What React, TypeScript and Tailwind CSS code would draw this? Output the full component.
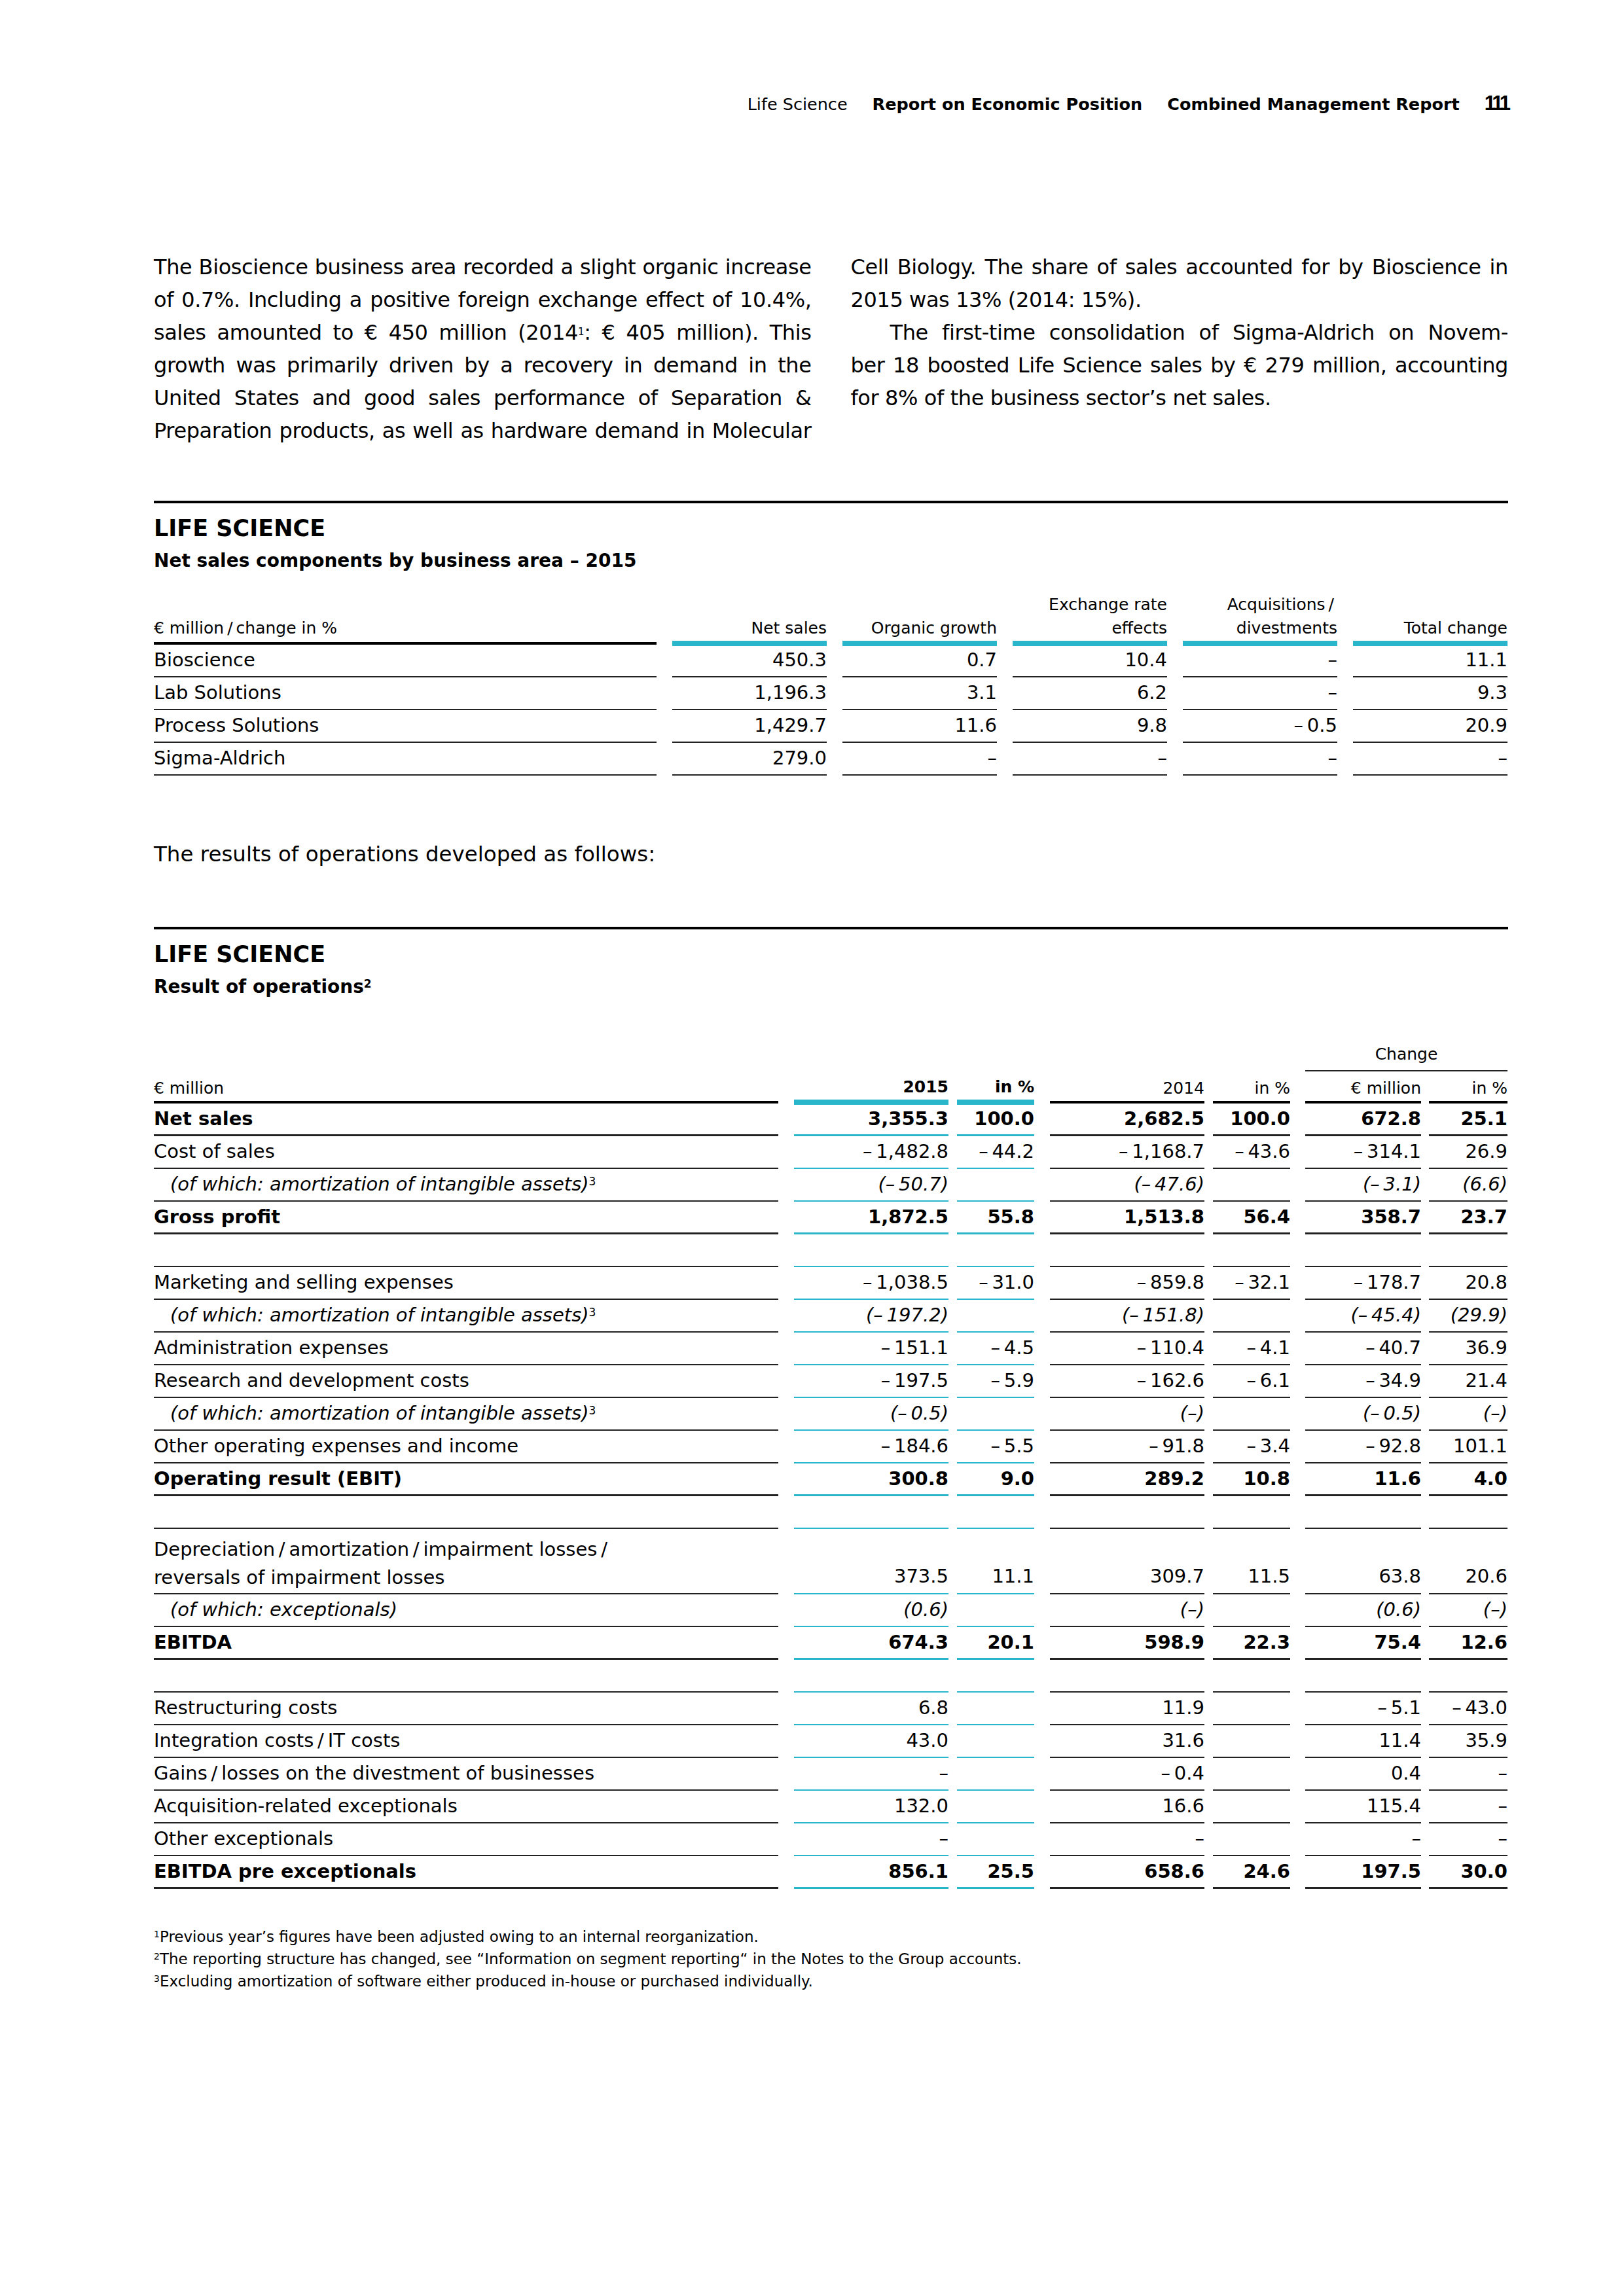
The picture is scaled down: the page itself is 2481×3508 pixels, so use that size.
import React from "react";

const CYAN = "border-[#29b5ca]";
const DARK = "border-[#222]";

// one justified line of body copy
function Line({ children, last = false, indent = false }: { children: React.ReactNode; last?: boolean; indent?: boolean }) {
  return (
    <span
      className={
        "block whitespace-nowrap " +
        (last ? "text-left" : "text-justify [text-align-last:justify]") +
        (indent ? " pl-[60px]" : "")
      }
    >
      {children}
    </span>
  );
}

function SectionTitle({ sub }: { sub: React.ReactNode }) {
  return (
    <div>
      <div className="h-[4px] bg-black" />
      <div className="mt-[18px] text-[35px] leading-[40px] font-bold">LIFE SCIENCE</div>
      <div className="mt-[12px] text-[28px] leading-[36px] font-bold">{sub}</div>
    </div>
  );
}

const sl = "\u2009/\u2009";

/* ---------- table 1 ---------- */

const t1Heads: React.ReactNode[] = [
  "Net sales",
  "Organic growth",
  <>Exchange rate<br />effects</>,
  <>Acquisitions{sl}<br />divestments</>,
  "Total change",
];

const t1Rows = [
  { label: "Bioscience", values: ["450.3", "0.7", "10.4", "–", "11.1"] },
  { label: "Lab Solutions", values: ["1,196.3", "3.1", "6.2", "–", "9.3"] },
  { label: "Process Solutions", values: ["1,429.7", "11.6", "9.8", "–\u20090.5", "20.9"] },
  { label: "Sigma-Aldrich", values: ["279.0", "–", "–", "–", "–"] },
];

function NetSalesTable() {
  return (
    <div className="mt-[31px]">
      <div className="flex items-end text-[25px] leading-[36px]">
        <div className={"w-[768px] pb-[3px] border-b-4 border-black"}>€ million{sl}change in %</div>
        {t1Heads.map((h, i) => (
          <div key={i} className={"w-[236px] ml-[24px] text-right pb-[1px] border-b-8 mb-[-2px] " + CYAN}>
            {h}
          </div>
        ))}
      </div>
      {t1Rows.map((r) => (
        <div key={r.label} className="flex text-[29px]">
          <div className={"w-[768px] h-[50px] flex items-center border-b-2 " + DARK}>{r.label}</div>
          {r.values.map((v, i) => (
            <div key={i} className={"w-[236px] ml-[24px] h-[50px] flex items-center justify-end border-b-2 " + DARK}>
              {v}
            </div>
          ))}
        </div>
      ))}
    </div>
  );
}

/* ---------- table 2 ---------- */

const cols2 = [
  { cls: "w-[236px] ml-[24px]", cyan: true },
  { cls: "w-[118px] ml-[13px]", cyan: true },
  { cls: "w-[236px] ml-[24px]", cyan: false },
  { cls: "w-[118px] ml-[13px]", cyan: false },
  { cls: "w-[177px] ml-[23px]", cyan: false },
  { cls: "w-[120px] ml-[12px]", cyan: false },
];

type Kind = "normal" | "bold" | "sub" | "spacer" | "double";

interface Row2 {
  label?: React.ReactNode;
  values?: string[];
  kind: Kind;
}

const m = (s: string) => "–\u2009" + s;
const ofWhich = (
  <>
    (of which: amortization of intangible assets)<sup className="text-[17px] not-italic">3</sup>
  </>
);

const t2Rows: Row2[] = [
  { label: "Net sales", kind: "bold", values: ["3,355.3", "100.0", "2,682.5", "100.0", "672.8", "25.1"] },
  { label: "Cost of sales", kind: "normal", values: [m("1,482.8"), m("44.2"), m("1,168.7"), m("43.6"), m("314.1"), "26.9"] },
  { label: ofWhich, kind: "sub", values: ["(" + m("50.7") + ")", "", "(" + m("47.6") + ")", "", "(" + m("3.1") + ")", "(6.6)"] },
  { label: "Gross profit", kind: "bold", values: ["1,872.5", "55.8", "1,513.8", "56.4", "358.7", "23.7"] },
  { kind: "spacer" },
  { label: "Marketing and selling expenses", kind: "normal", values: [m("1,038.5"), m("31.0"), m("859.8"), m("32.1"), m("178.7"), "20.8"] },
  { label: ofWhich, kind: "sub", values: ["(" + m("197.2") + ")", "", "(" + m("151.8") + ")", "", "(" + m("45.4") + ")", "(29.9)"] },
  { label: "Administration expenses", kind: "normal", values: [m("151.1"), m("4.5"), m("110.4"), m("4.1"), m("40.7"), "36.9"] },
  { label: "Research and development costs", kind: "normal", values: [m("197.5"), m("5.9"), m("162.6"), m("6.1"), m("34.9"), "21.4"] },
  { label: ofWhich, kind: "sub", values: ["(" + m("0.5") + ")", "", "(–)", "", "(" + m("0.5") + ")", "(–)"] },
  { label: "Other operating expenses and income", kind: "normal", values: [m("184.6"), m("5.5"), m("91.8"), m("3.4"), m("92.8"), "101.1"] },
  { label: "Operating result (EBIT)", kind: "bold", values: ["300.8", "9.0", "289.2", "10.8", "11.6", "4.0"] },
  { kind: "spacer" },
  {
    label: (
      <>
        Depreciation{sl}amortization{sl}impairment losses{sl}
        <br />
        reversals of impairment losses
      </>
    ),
    kind: "double",
    values: ["373.5", "11.1", "309.7", "11.5", "63.8", "20.6"],
  },
  { label: "(of which: exceptionals)", kind: "sub", values: ["(0.6)", "", "(–)", "", "(0.6)", "(–)"] },
  { label: "EBITDA", kind: "bold", values: ["674.3", "20.1", "598.9", "22.3", "75.4", "12.6"] },
  { kind: "spacer" },
  { label: "Restructuring costs", kind: "normal", values: ["6.8", "", "11.9", "", m("5.1"), m("43.0")] },
  { label: <>Integration costs{sl}IT costs</>, kind: "normal", values: ["43.0", "", "31.6", "", "11.4", "35.9"] },
  { label: <>Gains{sl}losses on the divestment of businesses</>, kind: "normal", values: ["–", "", m("0.4"), "", "0.4", "–"] },
  { label: "Acquisition-related exceptionals", kind: "normal", values: ["132.0", "", "16.6", "", "115.4", "–"] },
  { label: "Other exceptionals", kind: "normal", values: ["–", "", "–", "", "–", "–"] },
  { label: "EBITDA pre exceptionals", kind: "bold", values: ["856.1", "25.5", "658.6", "24.6", "197.5", "30.0"] },
];

function ResultRow({ row }: { row: Row2 }) {
  const border = row.kind === "bold" ? "border-b-[3px] " : "border-b-2 ";
  const height = row.kind === "double" ? "h-[100px] items-end pb-[2px] " : "h-[50px] items-center ";
  const text = row.kind === "bold" ? "font-bold " : row.kind === "sub" ? "italic " : "";
  return (
    <div className={"flex text-[29px] " + text}>
      <div className={"w-[954px] flex " + height + border + DARK + (row.kind === "sub" ? " pl-[25px]" : "")}>
        <div className={row.kind === "double" ? "leading-[43px]" : ""}>{row.label}</div>
      </div>
      {cols2.map((c, i) => (
        <div
          key={i}
          className={c.cls + " flex justify-end " + height + border + (c.cyan ? CYAN : DARK)}
        >
          <div className={row.kind === "double" ? "h-[46px] flex items-center" : ""}>{row.values?.[i] ?? ""}</div>
        </div>
      ))}
    </div>
  );
}

function ResultTable() {
  const heads = ["2015", "in %", "2014", "in %"];
  return (
    <div className="mt-[67px]">
      <div className="flex items-end text-[25px] leading-[36px]">
        <div className="w-[954px] pb-[1px] border-b-4 border-black">€ million</div>
        {heads.map((h, i) => (
          <div
            key={i}
            className={
              cols2[i].cls +
              " text-right " +
              (cols2[i].cyan ? "font-bold pb-[1px] border-b-8 mb-[-2px] " + CYAN : "pb-[1px] border-b-4 border-black")
            }
          >
            {h}
          </div>
        ))}
        <div className="ml-[23px] w-[309px] flex flex-col">
          <div className="text-center border-b-2 border-[#222] mb-[8px] pb-[6px]">Change</div>
          <div className="flex">
            <div className="w-[177px] text-right pb-[1px] border-b-4 border-black">€ million</div>
            <div className="w-[120px] ml-[12px] text-right pb-[1px] border-b-4 border-black">in %</div>
          </div>
        </div>
      </div>
      {t2Rows.map((r, i) => (
        <ResultRow key={i} row={r} />
      ))}
    </div>
  );
}

export default function App() {
  return (
    <div className="w-[2481px] min-h-[3508px] bg-white text-black pl-[235px] pr-[177px] font-['DejaVu_Sans',Verdana,sans-serif]">
      {/* running head */}
      <div className="pt-[143px] flex justify-end items-baseline gap-[38px] text-[25.5px] leading-[30px]">
        <span>Life Science</span>
        <span className="font-bold">Report on Economic Position</span>
        <span className="font-bold">Combined Management Report</span>
        <span className="font-bold text-[31px] tracking-[-4px] font-['Liberation_Sans',Arial,sans-serif]">111</span>
      </div>

      {/* body copy */}
      <div className="mt-[209px] grid grid-cols-2 gap-x-[60px] text-[32px] tracking-[-0.4px] leading-[50px]">
        <div>
          <Line>The Bioscience business area recorded a slight organic increase</Line>
          <Line>of 0.7%. Including a positive foreign exchange effect of 10.4%,</Line>
          <Line>
            sales amounted to € 450 million (2014<sup className="text-[15px]">1</sup>: € 405 million). This
          </Line>
          <Line>growth was primarily driven by a recovery in demand in the</Line>
          <Line>United States and good sales performance of Separation &amp;</Line>
          <Line>Preparation products, as well as hardware demand in Molecular</Line>
        </div>
        <div>
          <Line>Cell Biology. The share of sales accounted for by Bioscience in</Line>
          <Line last>2015 was 13% (2014: 15%).</Line>
          <Line indent>The first-time consolidation of Sigma-Aldrich on Novem-</Line>
          <Line>ber 18 boosted Life Science sales by € 279 million, accounting</Line>
          <Line last>for 8% of the business sector’s net sales.</Line>
        </div>
      </div>

      <div className="mt-[82px]">
        <SectionTitle sub="Net sales components by business area – 2015" />
        <NetSalesTable />
      </div>

      <p className="mt-[95px] text-[32.5px] leading-[50px]">The results of operations developed as follows:</p>

      <div className="mt-[86px]">
        <SectionTitle
          sub={
            <>
              Result of operations<sup className="text-[17px]">2</sup>
            </>
          }
        />
        <ResultTable />
      </div>

      {/* footnotes */}
      <div className="mt-[56px] text-[23px] leading-[34px]">
        <p>
          <sup className="text-[14px]">1</sup>Previous year’s figures have been adjusted owing to an internal reorganization.
        </p>
        <p>
          <sup className="text-[14px]">2</sup>The reporting structure has changed, see “Information on segment reporting“ in the Notes to the Group accounts.
        </p>
        <p>
          <sup className="text-[14px]">3</sup>Excluding amortization of software either produced in-house or purchased individually.
        </p>
      </div>
    </div>
  );
}
